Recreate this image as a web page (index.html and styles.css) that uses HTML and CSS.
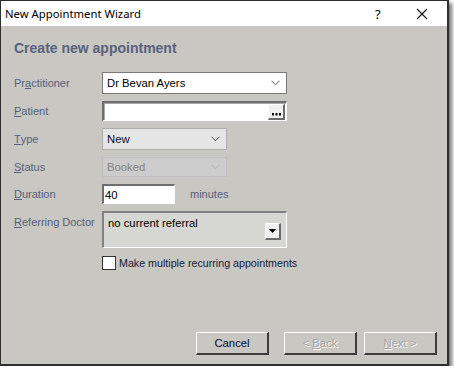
FILE: index.html
```html
<!DOCTYPE html>
<html>
  <head>
    <title>New Appointment Wizard</title>
    <link rel="stylesheet" href="styles.css">
  </head>
  <body>
    <div class="window">
      <div class="titlebar">
        <span class="title">New Appointment Wizard</span>
        <span class="help">?</span>
        <span class="close">
          <svg width="12" height="12" viewBox="0 0 12 12"><path d="M1 1 L11 11 M11 1 L1 11" stroke="#111" stroke-width="1.1" fill="none"/></svg>
        </span>
      </div>

      <div class="content">
        <h1>Create new appointment</h1>

        <div class="form">
          <label class="lbl">Pr<u>a</u>ctitioner</label>
          <div class="select wide">
            <span>Dr Bevan Ayers</span>
            <svg class="chev" width="9" height="6" viewBox="0 0 9 6"><path d="M0.5 0.8 L4.5 4.8 L8.5 0.8" stroke="#555" fill="none"/></svg>
          </div>

          <label class="lbl"><u>P</u>atient</label>
          <div class="sunken wide patient">
            <span class="dots">
              <svg width="9" height="3" viewBox="0 0 9 3"><rect x="0" y="0" width="2" height="2.5"/><rect x="3.5" y="0" width="2" height="2.5"/><rect x="7" y="0" width="2" height="2.5"/></svg>
            </span>
          </div>

          <label class="lbl"><u>T</u>ype</label>
          <div class="select short type">
            <span>New</span>
            <svg class="chev" width="9" height="6" viewBox="0 0 9 6"><path d="M0.5 0.8 L4.5 4.8 L8.5 0.8" stroke="#555" fill="none"/></svg>
          </div>

          <label class="lbl"><u>S</u>tatus</label>
          <div class="select short disabled">
            <span>Booked</span>
            <svg class="chev" width="9" height="6" viewBox="0 0 9 6"><path d="M0.5 0.8 L4.5 4.8 L8.5 0.8" stroke="#b4b4b4" fill="none"/></svg>
          </div>

          <label class="lbl"><u>D</u>uration</label>
          <div class="duration">
            <div class="sunken num">40</div>
            <span class="unit">minutes</span>
          </div>

          <label class="lbl top"><u>R</u>eferring Doctor</label>
          <div class="sunken wide referral">
            <span>no current referral</span>
            <span class="dropbtn">
              <svg width="7" height="4" viewBox="0 0 7 4"><path d="M0 0 L7 0 L3.5 4 Z" fill="#000"/></svg>
            </span>
          </div>

          <span></span>
          <div class="check">
            <span class="box"></span>
            <span>Make multiple recurring appointments</span>
          </div>
        </div>

        <div class="buttons">
          <button class="btn">Cancel</button>
          <button class="btn off back">&lt; <u>B</u>ack</button>
          <button class="btn off"><u>N</u>ext &gt;</button>
        </div>
      </div>
    </div>
  </body>
</html>
```

FILE: styles.css
```css
body {
  margin: 0;
  background-color: #fff;
  font-family: "Liberation Sans", Arial, sans-serif;
  font-size: 11px;
  color: #000;
}

.window {
  box-sizing: border-box;
  width: 449px;
  height: 366px;
  border: 1px solid #2e2e2e;
  border-right-width: 2px;
  border-bottom-width: 2px;
  background-color: #c8c7c2;
  box-shadow: 3px 3px 4px rgba(0, 0, 0, 0.55);
  display: flex;
  flex-direction: column;
}

.titlebar {
  height: 25px;
  background-color: #fff;
  display: flex;
  align-items: center;
  padding-left: 4px;
  font-family: "Noto Sans", sans-serif;
  font-size: 11.3px;
}

.title {
  flex-grow: 1;
}

.help {
  width: 14px;
  margin-right: 27px;
  font-size: 13px;
}

.close {
  width: 12px;
  height: 12px;
  margin-right: 19px;
  display: flex;
}

.content {
  flex-grow: 1;
  display: flex;
  flex-direction: column;
  padding: 14px 10px 9px 13px;
}

h1 {
  margin: 0;
  font-size: 14px;
  line-height: 16px;
  font-weight: bold;
  color: #59617e;
}

.form {
  margin-top: 16px;
  display: grid;
  grid-template-columns: 88px 1fr;
  grid-template-rows: 22px 20px 22px 20px 20px 37px 15px;
  row-gap: 7px;
}

.form > :nth-last-child(2) {
  margin-top: 3px;
}

.lbl {
  color: #56607d;
  display: flex;
  align-items: center;
}

.lbl.top {
  align-items: flex-start;
  padding-top: 5px;
}

.wide {
  width: 185px;
}

.short {
  width: 125px;
}

.select {
  box-sizing: border-box;
  border: 1px solid #7a7a7a;
  background-color: #fff;
  display: flex;
  align-items: center;
  justify-content: space-between;
  padding: 0 6px 0 4px;
  font-size: 11.3px;
}

.select.type {
  background-color: #e5e5e5;
  border-color: #adadad;
  color: #0a0a2a;
}

.select.disabled {
  background-color: #cccccc;
  border-color: #bfbfbf;
  color: #838383;
}

.sunken {
  box-sizing: border-box;
  border-style: solid;
  border-width: 2px 1px 1px 2px;
  border-color: #6e6e6e #fff #fff #6e6e6e;
  background-color: #fff;
}

.patient {
  display: flex;
  justify-content: flex-end;
  align-items: center;
  padding-right: 1px;
  box-shadow: inset 1px 1px 0 #a8a8a8;
}

.dots {
  box-sizing: border-box;
  width: 17px;
  height: 16px;
  background-color: #f0f0f0;
  border-style: solid;
  border-width: 1px 2px 2px 1px;
  border-color: #fff #6a6a6a #6a6a6a #fff;
  display: flex;
  align-items: flex-end;
  justify-content: center;
  padding-bottom: 2px;
}

.duration {
  display: flex;
  align-items: center;
}

.num {
  width: 73px;
  height: 20px;
  padding-left: 1px;
  display: flex;
  align-items: center;
  font-size: 11.3px;
}

.unit {
  margin-left: 15px;
  color: #56607d;
}

.referral {
  height: 37px;
  background-color: #d6d6d2;
  border-color: #808080 #fff #fff #808080;
  display: flex;
  justify-content: space-between;
  align-items: flex-start;
  padding: 4px 5px 0 4px;
  font-size: 11.3px;
}

.dropbtn {
  box-sizing: border-box;
  width: 16px;
  height: 17px;
  margin-top: 6px;
  background-color: #f0f0f0;
  border-style: solid;
  border-width: 1px 2px 2px 1px;
  border-color: #fff #6a6a6a #6a6a6a #fff;
  display: flex;
  align-items: center;
  justify-content: center;
}

.check {
  display: flex;
  align-items: center;
  gap: 3px;
  color: #141a3a;
  font-size: 10.7px;
}

.box {
  box-sizing: border-box;
  width: 14px;
  height: 14px;
  border: 1px solid #333;
  background-color: #fff;
}

.buttons {
  margin-top: auto;
  display: flex;
  justify-content: flex-end;
  gap: 7px;
}

.btn {
  box-sizing: border-box;
  width: 73px;
  height: 23px;
  background-color: #c8c7c2;
  border-style: solid;
  border-width: 1px 2px 2px 1px;
  border-color: #fff #3c3c3c #3c3c3c #fff;
  font-family: "Liberation Sans", Arial, sans-serif;
  font-size: 11.3px;
  color: #0b0b2b;
  padding: 0;
}

.btn.off {
  color: #a4a4a4;
  text-shadow: 1px 1px 0 #fff;
}

.btn.back {
  margin-left: 8px;
}
```
